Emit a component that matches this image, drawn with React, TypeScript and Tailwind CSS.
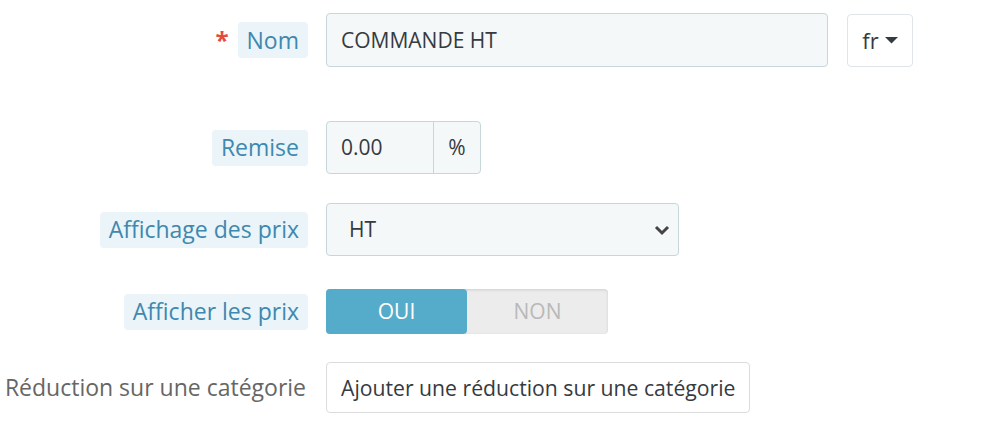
const Badge = ({ children }: { children: React.ReactNode }) => (
  <span className="inline-flex h-[36px] items-center rounded-[4px] bg-[#eaf4f9] px-[9px] text-[23px] text-[#3f88ae]">
    {children}
  </span>
);

export default function App() {
  return (
    <div
      className="h-[434px] w-[1000px] bg-white pt-[13px] text-[21px]"
      style={{ fontFamily: '"Open Sans", "Liberation Sans", sans-serif' }}
    >
      {/* Nom */}
      <div className="flex h-[54px] items-center gap-[18px]">
        <div className="flex w-[308px] items-center justify-end gap-[9px]">
          <span className="text-[24px] font-bold text-[#e54b3c] leading-none">*</span>
          <Badge>Nom</Badge>
        </div>
        <input
          readOnly
          value="COMMANDE HT"
          className="h-[54px] w-[502px] rounded-[4px] border border-[#c7d6db] bg-[#f5f8f9] px-[14px] text-[21px] text-[#363a41] outline-none"
        />
        <button className="ml-[1px] flex h-[53px] w-[66px] items-center justify-center gap-[6px] rounded-[4px] border border-[#dfe4e6] bg-white text-[22px] text-[#363a41]">
          fr
          <svg width="13" height="8" viewBox="0 0 13 8">
            <path d="M0 1h13L6.5 7.5z" fill="#363a41" />
          </svg>
        </button>
      </div>

      {/* Remise */}
      <div className="mt-[54px] flex h-[53px] items-center gap-[18px]">
        <div className="flex w-[308px] justify-end">
          <Badge>Remise</Badge>
        </div>
        <div className="flex h-[53px] w-[155px] rounded-[4px] border border-[#c7d6db] bg-[#f5f8f9]">
          <input
            readOnly
            value="0.00"
            className="w-[106px] bg-transparent px-[14px] text-[21px] text-[#363a41] outline-none"
          />
          <span className="flex flex-1 items-center justify-center border-l border-[#c7d6db] text-[21px] text-[#363a41]">
            %
          </span>
        </div>
      </div>

      {/* Affichage des prix */}
      <div className="mt-[29px] flex h-[53px] items-center gap-[18px]">
        <div className="flex w-[308px] justify-end">
          <Badge>Affichage des prix</Badge>
        </div>
        <div className="flex h-[53px] w-[353px] items-center justify-between rounded-[4px] border border-[#c7d6db] bg-[#f5f8f9] pl-[22px] pr-[8px] text-[21px] text-[#363a41]">
          <span>HT</span>
          <svg width="16" height="12" viewBox="0 0 16 12">
            <path d="M2 3l6 6 6-6" fill="none" stroke="#444" strokeWidth="3" />
          </svg>
        </div>
      </div>

      {/* Afficher les prix */}
      <div className="mt-[33px] flex h-[45px] items-center gap-[18px]">
        <div className="flex w-[308px] justify-end">
          <Badge>Afficher les prix</Badge>
        </div>
        <div className="flex h-[45px] w-[282px] rounded-[4px] bg-[#ececec] shadow-[inset_0_1px_3px_rgba(0,0,0,0.12)]">
          <span className="flex w-[141px] items-center justify-center rounded-[4px] bg-[#55acca] text-[21px] text-white">
            OUI
          </span>
          <span className="flex flex-1 items-center justify-center text-[21px] text-[#b9b9b9]">
            NON
          </span>
        </div>
      </div>

      {/* Réduction sur une catégorie */}
      <div className="mt-[28px] flex h-[51px] items-center gap-[18px]">
        <div className="flex w-[308px] justify-end whitespace-nowrap pr-[2px] text-[23px] text-[#666]">
          Réduction sur une catégorie
        </div>
        <button className="h-[51px] whitespace-nowrap rounded-[4px] border border-[#dcdcdc] bg-white px-[14px] text-[21.2px] text-[#363a41]">
          Ajouter une réduction sur une catégorie
        </button>
      </div>
    </div>
  );
}
